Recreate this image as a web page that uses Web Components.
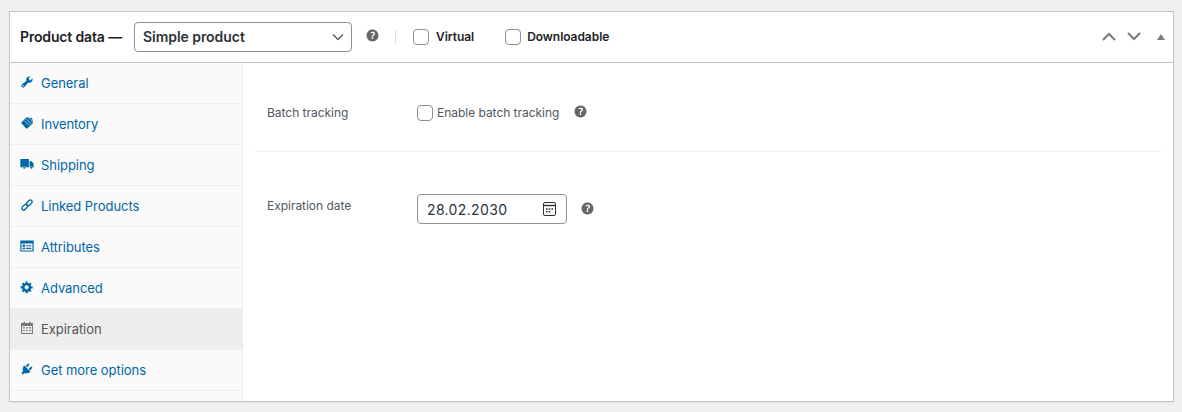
<!DOCTYPE html>
<html lang="en">
<head>
<meta charset="utf-8">
<title>Product data</title>
<style>
  html, body { margin: 0; height: 100%; }
  body {
    background: #f0f0f1;
    padding: 11px 8px 10px 9px;
    box-sizing: border-box;
    font-family: Inter, "Liberation Sans", sans-serif;
    -webkit-font-smoothing: antialiased;
  }
</style>
</head>
<body>
<product-data>
  <data-header slot="header"></data-header>
  <tab-item slot="tabs" icon="wrench">General</tab-item>
  <tab-item slot="tabs" icon="tag">Inventory</tab-item>
  <tab-item slot="tabs" icon="truck">Shipping</tab-item>
  <tab-item slot="tabs" icon="link">Linked Products</tab-item>
  <tab-item slot="tabs" icon="list">Attributes</tab-item>
  <tab-item slot="tabs" icon="gear">Advanced</tab-item>
  <tab-item slot="tabs" icon="calendar" active>Expiration</tab-item>
  <tab-item slot="tabs" icon="plug">Get more options</tab-item>
  <field-row label="Batch tracking" kind="check">
    <check-box>Enable batch tracking</check-box>
    <help-tip></help-tip>
  </field-row>
  <field-row label="Expiration date" kind="date">
    <date-box>28.02.2030</date-box>
    <help-tip></help-tip>
  </field-row>
</product-data>

<script>
const ICONS = {
  wrench: `<path d="M16.68 9.77c-1.34 1.34-3.3 1.67-4.95.99l-5.41 6.52c-.99.99-2.59.99-3.58 0s-.99-2.59 0-3.57l6.52-5.42c-.68-1.65-.35-3.61.99-4.95 1.28-1.28 3.12-1.62 4.72-1.06l-2.89 2.89 2.82 2.82 2.86-2.87c.53 1.58.18 3.39-1.08 4.65zM3.81 16.21c.4.39 1.04.39 1.43 0 .4-.4.4-1.04 0-1.43-.39-.4-1.03-.4-1.43 0-.39.39-.39 1.03 0 1.43z"/>`,
  tag: `<path d="M1.5 9.8 8.8 2.5l2-.7 6.4 1.5 1.3 5.4-.6 2-7.5 7.3-1.8 0z"/><path d="M6.5 6.8l7 7M9 4.4l7 7" stroke="#fafafa" stroke-width=".9" fill="none"/><path d="M11.5 2.6l2 .5 3 3 .6 2.2" stroke="#fafafa" stroke-width=".9" fill="none"/>`,
  truck: `<path d="M.5 3h12.2v11.5H8a2.2 2.2 0 0 0-4 0H.5zM13.7 6h3.3l2.5 4v4.5h-1.2a2.2 2.2 0 0 0-4 0h-.6z"/><circle cx="6" cy="15.2" r="1.6"/><circle cx="16.3" cy="15.2" r="1.6"/>`,
  link: `<g fill="none" stroke="currentColor" stroke-width="1.9"><rect x="2" y="10.4" width="9.6" height="5.2" rx="2.6" transform="rotate(-45 6.8 13)"/><rect x="8.4" y="4.4" width="9.6" height="5.2" rx="2.6" transform="rotate(-45 13.2 7)"/></g>`,
  list: `<path fill-rule="evenodd" d="M.5 2h19v16H.5zM2.2 6.5v9.8h15.6V6.5z"/><path d="M3.8 8h3.4v3.4H3.8zM3.8 12.6h3.4v2H3.8zM8.6 8.8h7.6v1.6H8.6zM8.6 12.6h7.6v1.6H8.6z"/>`,
  gear: `<path d="M18 12h-2.18c-.17.7-.44 1.35-.81 1.93l1.54 1.54-2.1 2.1-1.54-1.54c-.58.36-1.23.63-1.91.79V19H8v-2.18c-.68-.16-1.33-.43-1.91-.79l-1.54 1.54-2.12-2.12 1.54-1.54c-.36-.58-.63-1.23-.79-1.91H1V9.03h2.17c.16-.7.44-1.35.8-1.94L2.43 5.55l2.1-2.1 1.54 1.54c.58-.37 1.24-.64 1.93-.81V2h3v2.18c.68.16 1.33.43 1.91.79l1.54-1.54 2.12 2.12-1.54 1.54c.36.59.64 1.24.8 1.94H18V12zm-8.5 1.5c1.66 0 3-1.34 3-3s-1.34-3-3-3-3 1.34-3 3 1.34 3 3 3z"/>`,
  calendar: `<path fill-rule="evenodd" d="M5 1h2v2h6V1h2v2h3.5v15.5h-17V3H5zM3 7v10h14V7z"/><path d="M4.6 8.4h2.2v2.2H4.6zM8.9 8.4h2.2v2.2H8.9zM13.2 8.4h2.2v2.2h-2.2zM4.6 12.6h2.2v2.2H4.6zM8.9 12.6h2.2v2.2H8.9zM13.2 12.6h2.2v2.2h-2.2z"/>`,
  plug: `<path d="M13.11 4.36L9.87 7.6 8 5.73l3.24-3.24c.35-.34 1.05-.2 1.56.32.52.51.66 1.21.31 1.55zm-8 1.77l.91-1.12 9.01 9.01-1.19.84c-.71.71-2.63 1.16-3.82 1.16H6.14L4.9 17.26c-.59.59-1.54.59-2.12 0-.59-.58-.59-1.53 0-2.12l1.24-1.24v-3.88c0-1.13.4-3.19 1.09-3.89zm7.26 3.97l3.24-3.24c.34-.35 1.04-.21 1.55.31.52.51.66 1.21.31 1.55l-3.24 3.25z"/>`
};

class ProductData extends HTMLElement {
  constructor() {
    super();
    this.attachShadow({ mode: "open" });
    this.shadowRoot.innerHTML = /* html */`
    <style>
      :host {
        display: grid;
        grid-template-rows: 51px 1fr;
        height: 100%;
        box-sizing: border-box;
        background: #fff;
        border: 1px solid #c3c4c7;
        box-shadow: 0 1px 1px rgba(0, 0, 0, .04);
      }
      .body {
        display: grid;
        grid-template-columns: 233px 1fr;
        min-height: 0;
      }
      .tabs {
        display: flex;
        flex-direction: column;
        background: #fafafa;
        border-right: 1px solid #eee;
      }
      .panel {
        display: flex;
        flex-direction: column;
        padding: 0 12px;
      }
    </style>
    <slot name="header"></slot>
    <div class="body">
      <div class="tabs"><slot name="tabs"></slot></div>
      <div class="panel"><slot></slot></div>
    </div>`;
  }
}

class DataHeader extends HTMLElement {
  constructor() {
    super();
    this.attachShadow({ mode: "open" });
    this.shadowRoot.innerHTML = /* html */`
    <style>
      :host {
        display: flex;
        align-items: center;
        box-sizing: border-box;
        height: 51px;
        padding: 0 8px 1px 10px;
        border-bottom: 1px solid #c3c4c7;
        color: #1d2327;
      }
      .title { font-size: 14px; font-weight: 600; letter-spacing: -.15px; white-space: nowrap; width: 114px; }
      .select {
        display: flex;
        align-items: center;
        justify-content: space-between;
        box-sizing: border-box;
        width: 218px;
        height: 30px;
        padding: 0 7px 0 8px;
        border: 1px solid #8c8f94;
        border-radius: 4px;
        font-size: 14px;
        font-weight: 600;
        letter-spacing: -.05px;
        color: #2c3338;
      }
      .select svg { width: 12px; height: 12px; }
      help-tip { margin-left: 11.5px; }
      .sep { width: 1px; height: 14px; background: #ddd; margin: 0 17px 0 14.5px; }
      .option {
        display: flex;
        align-items: center;
        gap: 7px;
        font-size: 12px;
        font-weight: 600;
        letter-spacing: -.05px;
      }
      .box {
        box-sizing: border-box;
        width: 16px;
        height: 16px;
        background: #fff;
        border: 1px solid #8c8f94;
        border-radius: 4px;
      }
      .option + .option { margin-left: 31px; }
      .arrows { display: flex; align-items: center; margin-left: auto; color: #787c82; }
      .arrows svg { display: block; }
    </style>
    <div class="title">Product data —</div>
    <div class="select">Simple product
      <svg viewBox="0 0 12 12" fill="none" stroke="#50575e" stroke-width="1.3"><path d="M1 3.5 6 8.5l5-5"/></svg>
    </div>
    <help-tip></help-tip>
    <div class="sep"></div>
    <div class="option"><span class="box"></span>Virtual</div>
    <div class="option" style="gap:6px"><span class="box"></span>Downloadable</div>
    <div class="arrows">
      <svg width="14" height="9" viewBox="0 0 14 9" fill="none" stroke="currentColor" stroke-width="2"><path d="M1 8 7 2l6 6"/></svg>
      <svg width="14" height="9" viewBox="0 0 14 9" fill="none" stroke="currentColor" stroke-width="2" style="margin-left:11px"><path d="M1 1l6 6 6-6"/></svg>
      <svg width="8" height="6" viewBox="0 0 8 6" fill="currentColor" style="margin-left:16px"><path d="M4 0l4 6H0z"/></svg>
    </div>`;
  }
}

class TabItem extends HTMLElement {
  constructor() {
    super();
    this.attachShadow({ mode: "open" });
  }

  connectedCallback() {
    const name = this.getAttribute("icon");
    this.shadowRoot.innerHTML = /* html */`
    <style>
      :host {
        display: flex;
        align-items: center;
        box-sizing: border-box;
        height: 41px;
        padding: 0 0 0 10px;
        gap: 7px;
        font-size: 13px;
        letter-spacing: -.05px;
        color: #0067a8;
        border-bottom: 1px solid #eee;
      }
      :host([active]) {
        background: #eee;
        color: #555;
      }
      svg { width: 14px; height: 14px; fill: currentColor; margin: -3px 0 0 0; flex: none; }
      :host([active]) svg { fill: #777; }
    </style>
    <svg viewBox="0 0 20 20">${ICONS[name]}</svg>
    <slot></slot>`;
  }
}

class HelpTip extends HTMLElement {
  constructor() {
    super();
    this.attachShadow({ mode: "open" });
    this.shadowRoot.innerHTML = /* html */`
    <style>
      :host { display: inline-flex; color: #666; }
      svg { width: 17px; height: 17px; fill: currentColor; margin-top: -2px; }
    </style>
    <svg viewBox="0 0 20 20"><path d="M17 10c0-3.87-3.14-7-7-7-3.87 0-7 3.13-7 7 0 3.86 3.13 7 7 7 3.86 0 7-3.14 7-7zm-6.3 1.48H9.14v-.43c0-.38.08-.7.24-.98s.46-.57.88-.89c.41-.29.68-.53.81-.71.14-.18.2-.39.2-.62 0-.25-.09-.44-.28-.58-.19-.13-.45-.19-.79-.19-.59 0-1.27.19-2.03.58l-.64-1.28c.87-.49 1.8-.74 2.78-.74.81 0 1.45.2 1.92.58.48.39.71.91.71 1.55 0 .43-.09.8-.29 1.11-.19.32-.57.67-1.11 1.06-.38.28-.61.49-.71.63-.1.15-.14.34-.14.57v.34zm-1.47 2.23c-.19-.18-.28-.43-.28-.75 0-.33.09-.58.27-.76s.44-.26.78-.26c.33 0 .58.09.76.27.19.18.28.43.28.75 0 .31-.09.56-.28.74-.18.19-.43.28-.76.28-.34 0-.6-.09-.77-.27z"/></svg>`;
  }
}

class FieldRow extends HTMLElement {
  constructor() {
    super();
    this.attachShadow({ mode: "open" });
  }

  connectedCallback() {
    this.shadowRoot.innerHTML = /* html */`
    <style>
      :host {
        display: flex;
        box-sizing: border-box;
        padding: 0 12px;
        font-size: 12px;
        letter-spacing: -.03px;
        color: #50575e;
      }
      :host([kind="check"]) {
        height: 89px;
        align-items: center;
        padding-top: 11px;
        border-bottom: 1px solid #eee;
      }
      :host([kind="date"]) { padding-top: 42px; }
      .label { width: 150px; flex: none; }
      :host([kind="date"]) .label { padding-top: 4px; }
      .field { display: flex; align-items: center; }
      ::slotted(help-tip) { margin-left: 11.5px; }
      :host([kind="check"]) ::slotted(help-tip) { margin-left: 12.5px; }
    </style>
    <div class="label">${this.getAttribute("label")}</div>
    <div class="field"><slot></slot></div>`;
  }
}

class CheckBox extends HTMLElement {
  constructor() {
    super();
    this.attachShadow({ mode: "open" });
    this.shadowRoot.innerHTML = /* html */`
    <style>
      :host { display: inline-flex; align-items: center; gap: 4px; white-space: nowrap; }
      .box {
        box-sizing: border-box;
        width: 16px;
        height: 16px;
        background: #fff;
        border: 1px solid #8c8f94;
        border-radius: 4px;
      }
    </style>
    <span class="box"></span><slot></slot>`;
  }
}

class DateBox extends HTMLElement {
  constructor() {
    super();
    this.attachShadow({ mode: "open" });
    this.shadowRoot.innerHTML = /* html */`
    <style>
      :host {
        display: flex;
        align-items: center;
        justify-content: space-between;
        box-sizing: border-box;
        width: 150px;
        height: 30px;
        padding: 0 11px 0 9px;
        border: 1px solid #8c8f94;
        border-radius: 4px;
        background: #fff;
        font-size: 14px;
        letter-spacing: .35px;
        color: #2c3338;
      }
      svg { width: 13px; height: 14px; margin-right: -1px; }
    </style>
    <span><slot></slot></span>
    <svg viewBox="0 0 13 14" fill="none" stroke="#2c3338" stroke-width="1">
      <rect x=".5" y=".5" width="12" height="13" rx="1.5"/>
      <path d="M.5 3.5h12" stroke-width="1.4"/>
      <path d="M3 7h1.6M5.7 7h1.6M8.4 7h1.6M3 9.8h1.6M5.7 9.8h1.6" stroke-width="1.5"/>
    </svg>`;
  }
}

customElements.define("product-data", ProductData);
customElements.define("data-header", DataHeader);
customElements.define("tab-item", TabItem);
customElements.define("help-tip", HelpTip);
customElements.define("field-row", FieldRow);
customElements.define("check-box", CheckBox);
customElements.define("date-box", DateBox);
</script>
</body>
</html>
